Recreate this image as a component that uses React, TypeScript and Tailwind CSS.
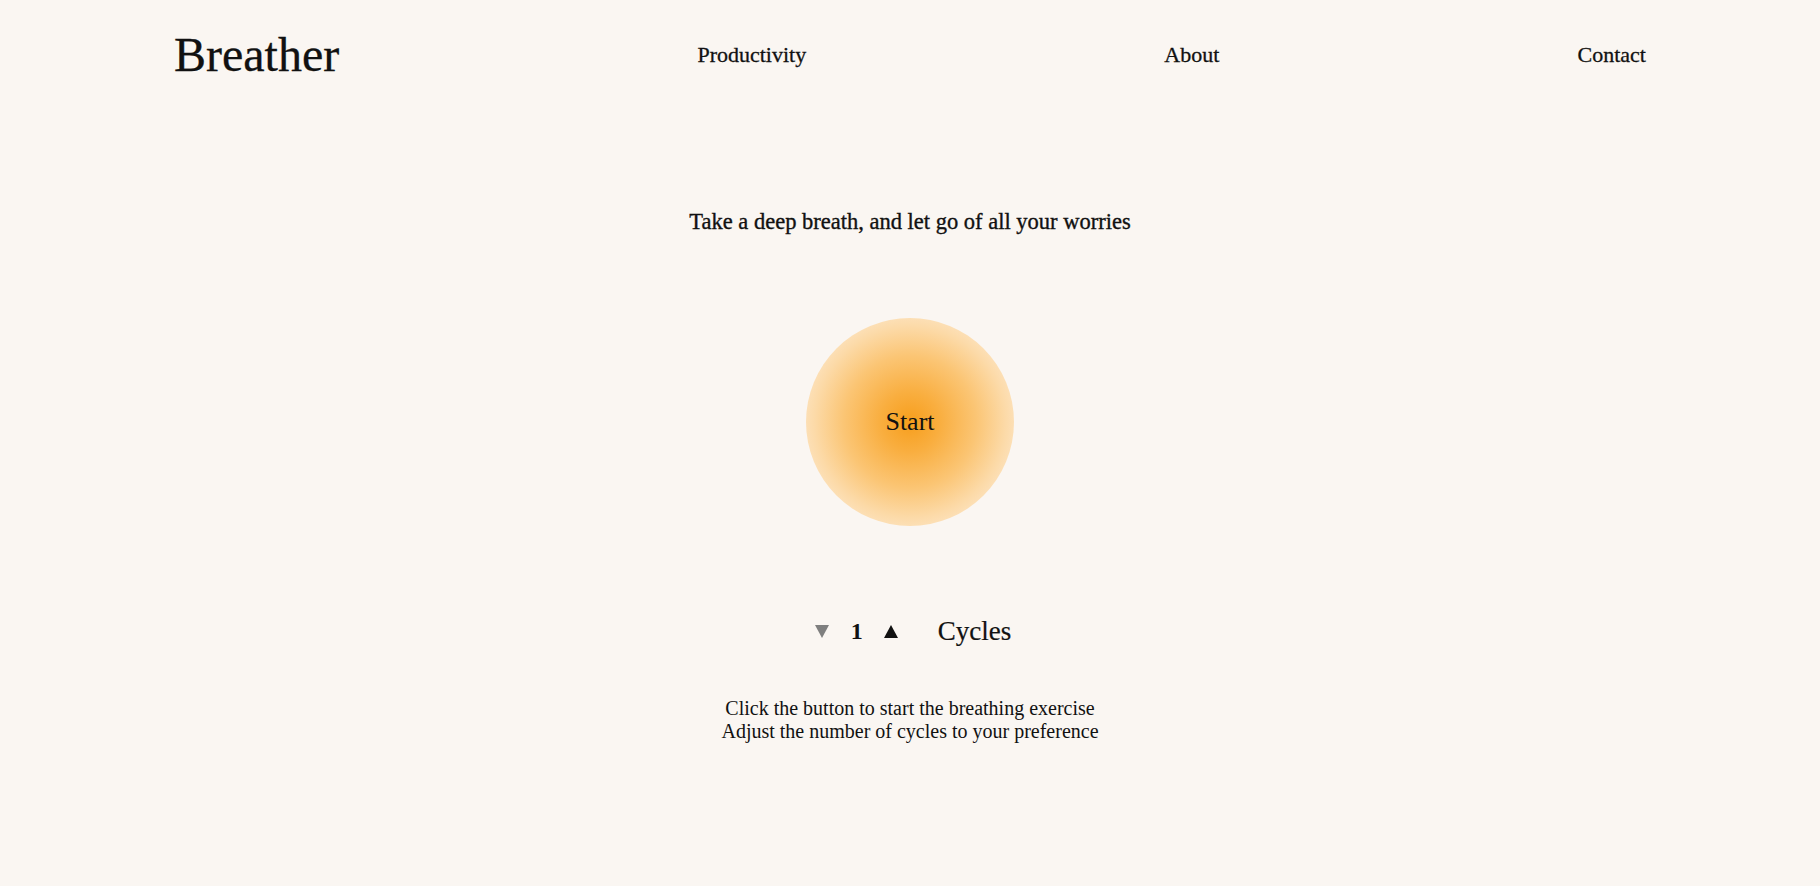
import { useState } from "react";

const serif = "font-['Liberation_Serif','Times_New_Roman',serif]";

export default function App() {
  const [cycles, setCycles] = useState(1);

  return (
    <main className={`min-h-screen w-full bg-[#faf6f2] text-[#111] ${serif}`}>
      {/* Header */}
      <header className="flex h-[110px] items-center justify-between px-[174px]">
        <span className="text-[48px] leading-[56px] [-webkit-text-stroke:0.3px_#111]">Breather</span>
        <a className="text-[22px] leading-[26px] [-webkit-text-stroke:0.3px_#111]">Productivity</a>
        <a className="text-[22px] leading-[26px] [-webkit-text-stroke:0.3px_#111]">About</a>
        <a className="text-[22px] leading-[26px] [-webkit-text-stroke:0.3px_#111]">Contact</a>
      </header>

      <section className="flex flex-col items-center">
        <h2 className="mt-[99px] text-[22.5px] leading-[26px] [-webkit-text-stroke:0.35px_#111]">
          Take a deep breath, and let go of all your worries
        </h2>

        <button className="mt-[83px] flex h-[208px] w-[208px] items-center justify-center rounded-full bg-[radial-gradient(circle,#f79e1c_0%,#f9ae3f_20%,#fbc574_45%,#fcdaa8_65%,#fde9cf_82%,#fcf1e5_100%)] text-[26px] leading-[30px]">
          Start
        </button>

        {/* Cycles */}
        <div className="mt-[89px] flex h-[32px] items-center pl-[6px]">
          <button
            onClick={() => setCycles((c) => Math.max(1, c - 1))}
            className="flex h-[13px] w-[14px] items-center"
          >
            <svg width="14" height="13" viewBox="0 0 14 13">
              <polygon points="0,0 14,0 7,13" fill="#7f7f7f" />
            </svg>
          </button>
          <span className="ml-[22px] w-[11px] text-center text-[24px] font-bold leading-[32px]">
            {cycles}
          </span>
          <button
            onClick={() => setCycles((c) => c + 1)}
            className="ml-[22px] flex h-[13px] w-[14px] items-center"
          >
            <svg width="14" height="13" viewBox="0 0 14 13">
              <polygon points="7,0 14,13 0,13" fill="#111" />
            </svg>
          </button>
          <span className="ml-[40px] text-[27px] leading-[32px] [-webkit-text-stroke:0.2px_#111]">Cycles</span>
        </div>

        <p className="mt-[50px] text-center text-[20px] leading-[23px]">
          Click the button to start the breathing exercise
          <br />
          Adjust the number of cycles to your preference
        </p>
      </section>
    </main>
  );
}
